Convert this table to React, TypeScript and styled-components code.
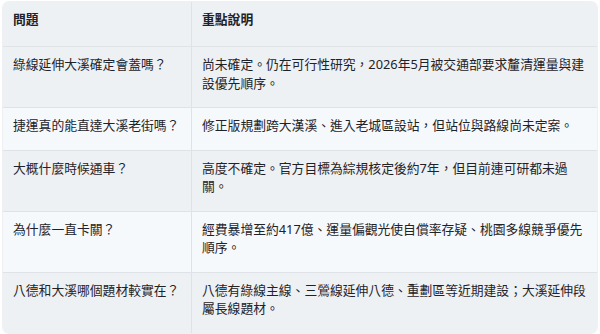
import { FC } from "react";
import styled, { createGlobalStyle } from "styled-components";

const GlobalStyle = createGlobalStyle`
  body {
    margin: 0;
    background: #ffffff;
    font-family: "Noto Sans", "Noto Sans CJK TC", sans-serif;
  }
`;

const Page = styled.div`
  padding: 2px 3px;
`;

const Table = styled.table`
  width: 594px;
  border-collapse: separate;
  border-spacing: 0;
  border-radius: 6px;
  overflow: hidden;
  box-shadow: 0 0 0 1px #eef0f3;
  table-layout: fixed;
  color: #1f2328;
  font-size: 12.8px;
  line-height: 18.5px;
`;

const Row = styled.tr<{ $shade: boolean }>`
  background: ${(p) => (p.$shade ? "#eef1f4" : "#f6f9fc")};
`;

const Head = styled.th<{ $first?: boolean }>`
  text-align: left;
  font-weight: 700;
  padding: 8px 10px 17.5px;
  height: 18.5px;
  border-bottom: 1px solid #dfe3e7;
  border-left: ${(p) => (p.$first ? "none" : "1px solid #dfe3e7")};
  width: ${(p) => (p.$first ? "168px" : "auto")};
  box-sizing: content-box;
`;

const Cell = styled.td<{ $first?: boolean; $last?: boolean }>`
  vertical-align: top;
  padding: 8px 10px 15px;
  border-bottom: ${(p) => (p.$last ? "none" : "1px solid #dfe3e7")};
  border-left: ${(p) => (p.$first ? "none" : "1px solid #dfe3e7")};
`;

const rows = [
  {
    q: "綠線延伸大溪確定會蓋嗎？",
    a: "尚未確定。仍在可行性研究，2026年5月被交通部要求釐清運量與建設優先順序。",
  },
  {
    q: "捷運真的能直達大溪老街嗎？",
    a: "修正版規劃跨大漢溪、進入老城區設站，但站位與路線尚未定案。",
  },
  {
    q: "大概什麼時候通車？",
    a: "高度不確定。官方目標為綜規核定後約7年，但目前連可研都未過關。",
  },
  {
    q: "為什麼一直卡關？",
    a: "經費暴增至約417億、運量偏觀光使自償率存疑、桃園多線競爭優先順序。",
  },
  {
    q: "八德和大溪哪個題材較實在？",
    a: "八德有綠線主線、三鶯線延伸八德、重劃區等近期建設；大溪延伸段屬長線題材。",
  },
];

const App: FC = () => {
  return (
    <Page>
      <GlobalStyle />
      <Table>
        <thead>
          <Row $shade={true}>
            <Head $first>問題</Head>
            <Head>重點說明</Head>
          </Row>
        </thead>
        <tbody>
          {rows.map((r, i) => (
            <Row key={i} $shade={i % 2 === 0}>
              <Cell $first $last={i === rows.length - 1}>
                {r.q}
              </Cell>
              <Cell $last={i === rows.length - 1}>{r.a}</Cell>
            </Row>
          ))}
        </tbody>
      </Table>
    </Page>
  );
};

export default App;
